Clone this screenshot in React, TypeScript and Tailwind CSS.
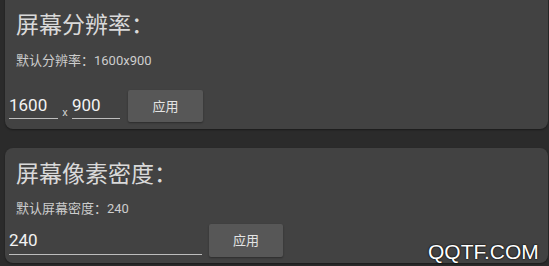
const font = { fontFamily: '"Roboto", "Noto Sans CJK SC", sans-serif' };

function ApplyButton({ className = '' }: { className?: string }) {
  return (
    <button
      className={`shrink-0 rounded-[2px] bg-[#575757] text-[13px] leading-none text-[#e4e4e4] shadow-[0_1px_2px_rgba(0,0,0,0.35)] ${className}`}
    >
      应用
    </button>
  );
}

function App() {
  return (
    <div
      className="relative h-[266px] w-[549px] overflow-hidden bg-[#2b2b2b] pl-[5px] pr-[1px]"
      style={font}
    >
      {/* Resolution card */}
      <div className="-mt-[8px] h-[137px] rounded-lg bg-[#424242] pt-[22px] shadow-[0_1px_2px_rgba(0,0,0,0.4)]">
        <h2 className="h-[24px] pl-[11px] text-[23px] leading-[24px] text-[#d9d9d9]">屏幕分辨率：</h2>
        <p className="mt-[16px] pl-[11px] text-[13px] leading-none text-[#cdcdcd]">默认分辨率：1600x900</p>
        <div className="mt-[23px] flex items-center pl-[4px]">
          <input
            readOnly
            value="1600"
            className="h-[25px] w-[49px] border-b border-[#bdbdbd] bg-transparent p-0 text-[17px] text-[#f2f2f2] outline-none"
          />
          <span className="mx-[3px] mt-[12px] w-[8px] text-center text-[11px] leading-none text-[#cfcfcf]">x</span>
          <input
            readOnly
            value="900"
            className="h-[25px] w-[48px] border-b border-[#bdbdbd] bg-transparent p-0 text-[17px] text-[#f2f2f2] outline-none"
          />
          <ApplyButton className="ml-[8px] h-[32px] w-[75px]" />
        </div>
      </div>

      {/* Density card */}
      <div className="mt-[19px] h-[115px] rounded-lg bg-[#424242] pt-[15px] shadow-[0_1px_2px_rgba(0,0,0,0.4)]">
        <h2 className="h-[24px] pl-[11px] text-[23px] leading-[24px] text-[#d9d9d9]">屏幕像素密度：</h2>
        <p className="mt-[15px] pl-[11px] text-[13px] leading-none text-[#cdcdcd]">默认屏幕密度：240</p>
        <div className="mt-[9px] flex items-center pl-[4px]">
          <input
            readOnly
            value="240"
            className="h-[28px] w-[193px] border-b border-[#bdbdbd] bg-transparent p-0 text-[17px] text-[#f2f2f2] outline-none"
          />
          <ApplyButton className="ml-[7px] h-[33px] w-[74px]" />
        </div>
      </div>

      {/* Watermark */}
      <span
        className="absolute left-[428px] top-[241px] text-[21px] leading-none text-white [text-shadow:0_0_2px_#000,0_0_1px_#000]"
        style={{ fontFamily: '"Liberation Sans", Arial, sans-serif' }}
      >
        QQTF.COM
      </span>
    </div>
  );
}

export default App;
